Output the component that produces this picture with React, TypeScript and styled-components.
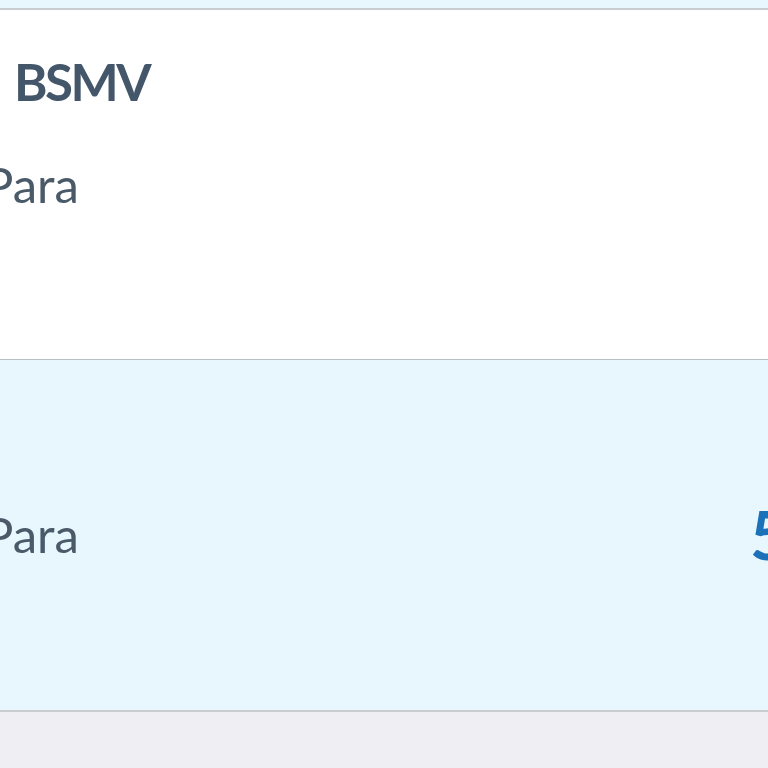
import React from "react";
import styled, { createGlobalStyle } from "styled-components";

const Global = createGlobalStyle`
  html, body { margin: 0; padding: 0; }
  body {
    background: #efeef3;
    overflow: hidden;
    font-family: Lato, "Noto Sans", sans-serif;
  }
`;

const Page = styled.div`
  width: 768px;
  height: 768px;
  overflow: hidden;
  background: #efeef3;
  display: flex;
  flex-direction: column;
`;

const PrevEdge = styled.div`
  height: 8px;
  background: #e8f7fe;
  border-bottom: 2px solid #c9cdd0;
  flex-shrink: 0;
`;

const Row = styled.div<{ $selected?: boolean; $last?: boolean }>`
  flex-shrink: 0;
  height: ${(p) => (p.$last ? "350px" : "349px")};
  box-sizing: content-box;
  overflow: hidden;
  display: grid;
  grid-template-columns: 752px auto;
  align-items: center;
  background: ${(p) => (p.$selected ? "#e8f7fe" : "#ffffff")};
  border-bottom: ${(p) => (p.$last ? "2px solid #c9cdd0" : "1px solid #b9c0c4")};
`;

const Texts = styled.div`
  align-self: start;
  padding: 40px 0 0 14px;
  display: flex;
  flex-direction: column;
  gap: 40px;
  white-space: nowrap;
`;

const Title = styled.div`
  font-size: 51px;
  line-height: 64px;
  font-weight: 700;
  letter-spacing: -2.5px;
  color: #44576a;
`;

const Subtitle = styled.div`
  font-size: 49px;
  line-height: 60px;
  font-weight: 400;
  color: #4a5a69;
  margin-left: -30px;
`;

const Value = styled.div`
  font-size: 66px;
  line-height: 1;
  font-weight: 700;
  color: #1b72b8;
  white-space: nowrap;
  margin-left: -2px;
`;

export default function App() {
  return (
    <>
      <Global />
      <Page>
        <PrevEdge />
        <Row>
          <Texts>
            <Title>BSMV</Title>
            <Subtitle>Para</Subtitle>
          </Texts>
        </Row>
        <Row $selected $last>
          <Texts>
            <Title>&nbsp;</Title>
            <Subtitle>Para</Subtitle>
          </Texts>
          <Value>5,00</Value>
        </Row>
      </Page>
    </>
  );
}
